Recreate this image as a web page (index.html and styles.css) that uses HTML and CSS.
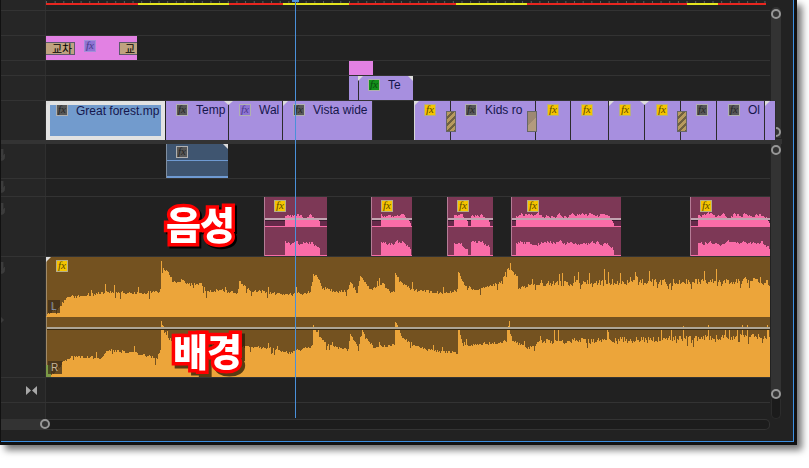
FILE: index.html
```html
<!DOCTYPE html>
<html lang="ko">
<head>
    <meta charset="UTF-8">
    <title>Timeline</title>
    <link rel="stylesheet" href="styles.css">
</head>
<body>
    <div class="window">
        <div class="panel">

            <!-- video tracks -->
            <div class="pane">
                <div class="tracks">
                    <div class="track track-ruler">
                        <div class="head"></div>
                        <div class="body">
                            <div class="ticks"></div>
                            <div class="render-bar">
                                <span class="seg red" style="width:92px"></span>
                                <span class="seg yellow" style="width:91px"></span>
                                <span class="seg red" style="width:54px"></span>
                                <span class="seg yellow" style="width:66px"></span>
                                <span class="seg red" style="width:107px"></span>
                                <span class="seg yellow" style="width:71px"></span>
                                <span class="seg red" style="width:160px"></span>
                                <span class="seg yellow" style="width:31px"></span>
                                <span class="seg red" style="width:48px"></span>
                            </div>
                        </div>
                    </div>
                    <div class="track track-v1">
                        <div class="head"></div>
                        <div class="body"></div>
                    </div>
                    <div class="track track-v1">
                        <div class="head"></div>
                        <div class="body">
                            <div class="clip clip-title clip-open" style="left:0;width:91px">
                                <span class="trans trans-left">교차</span>
                                <span class="fx fx-purple fx-title">fx</span>
                                <span class="trans trans-right">교</span>
                            </div>
                        </div>
                    </div>
                    <div class="track track-v2">
                        <div class="head"></div>
                        <div class="body">
                            <div class="clip clip-title" style="left:303px;width:24px"></div>
                        </div>
                    </div>
                    <div class="track track-v1">
                        <div class="head"></div>
                        <div class="body">
                            <div class="clip clip-video" style="left:303px;width:9px"></div>
                            <div class="clip clip-video clip-short" style="left:312px;width:55px">
                                <span class="fx fx-green">fx</span>
                                <span class="name">Te</span>
                            </div>
                            <i class="mark mark-tl" style="left:312px"></i>
                            <i class="mark mark-tr" style="left:362px"></i>
                        </div>
                    </div>
                    <div class="track track-main">
                        <div class="head"></div>
                        <div class="body">
                            <div class="clip clip-selected" style="left:0;width:119px">
                                <span class="fx fx-gray">fx</span>
                                <span class="name">Great forest.mp</span>
                            </div>
                            <div class="clip clip-video" style="left:120px;width:63px">
                                <span class="fx fx-gray">fx</span>
                                <span class="name">Temp</span>
                            </div>
                            <div class="clip clip-video" style="left:183px;width:54px">
                                <span class="fx fx-purple">fx</span>
                                <span class="name">Wal</span>
                            </div>
                            <div class="clip clip-video" style="left:237px;width:90px">
                                <span class="fx fx-gray">fx</span>
                                <span class="name">Vista wide</span>
                            </div>
                            <div class="clip clip-video clip-edge" style="left:368px;width:37px">
                                <span class="fx fx-yellow">fx</span>
                            </div>
                            <div class="clip clip-video" style="left:405px;width:85px;padding-left:14px">
                                <span class="fx fx-gray">fx</span>
                                <span class="name">Kids ro</span>
                            </div>
                            <div class="clip clip-video" style="left:490px;width:35px;padding-left:11px">
                                <span class="fx fx-yellow">fx</span>
                            </div>
                            <div class="clip clip-video" style="left:525px;width:38px;padding-left:10px">
                                <span class="fx fx-yellow">fx</span>
                            </div>
                            <div class="clip clip-video" style="left:563px;width:36px;padding-left:10px">
                                <span class="fx fx-yellow">fx</span>
                            </div>
                            <div class="clip clip-video" style="left:599px;width:36px;padding-left:11px">
                                <span class="fx fx-yellow">fx</span>
                            </div>
                            <div class="clip clip-video" style="left:635px;width:36px;padding-left:15px">
                                <span class="fx fx-gray">fx</span>
                            </div>
                            <div class="clip clip-video" style="left:671px;width:48px;padding-left:11px">
                                <span class="fx fx-gray">fx</span>
                                <span class="name">Ol</span>
                            </div>
                            <div class="clip clip-video" style="left:719px;width:5px"></div>
                            <i class="stripes" style="left:400px"></i>
                            <i class="stripes stripes-plain" style="left:481px"></i>
                            <i class="stripes" style="left:631px"></i>
                            <i class="mark mark-tl" style="left:0"></i>
                            <i class="mark mark-down" style="left:178px"></i>
                            <i class="mark mark-tl" style="left:237px"></i>
                            <i class="mark mark-tl" style="left:368px"></i>
                            <i class="mark mark-tl" style="left:563px"></i>
                            <i class="mark mark-down" style="left:594px"></i>
                            <i class="mark mark-tl" style="left:719px"></i>
                        </div>
                    </div>
                </div>
                <div class="vscroll vscroll-video">
                    <div class="thumb"><i class="knob"></i><i class="knob"></i></div>
                </div>
            </div>

            <div class="separator"></div>

            <!-- audio tracks -->
            <div class="pane pane-audio">
                <div class="tracks">
                    <div class="track track-a1">
                        <div class="head">
                            <svg class="mic" viewBox="0 0 5 13"><path d="M-3 0h5v8h-5zM3.500 5v3.500q0 2.500-3 3h-3"/></svg>
                        </div>
                        <div class="body">
                            <div class="clip clip-blue" style="left:120px;width:62px">
                                <span class="fx fx-gray">fx</span>
                                <i class="blue-line blue-line-top"></i>
                                <i class="blue-line blue-line-bottom"></i>
                            </div>
                            <i class="mark mark-tr" style="left:177px"></i>
                        </div>
                    </div>
                    <div class="track track-a2">
                        <div class="head">
                            <svg class="mic" viewBox="0 0 5 13"><path d="M-3 0h5v8h-5zM3.500 5v3.500q0 2.500-3 3h-3"/></svg>
                        </div>
                        <div class="body"></div>
                    </div>
                    <div class="track track-a3">
                        <div class="head">
                            <svg class="mic" viewBox="0 0 5 13"><path d="M-3 0h5v8h-5zM3.500 5v3.500q0 2.500-3 3h-3"/></svg>
                        </div>
                        <div class="body">
                            <div class="clip clip-voice" style="left:218px;width:63px"><span class="fx fx-yellow">fx</span></div>
                            <div class="clip clip-voice" style="left:325px;width:41px"><span class="fx fx-yellow">fx</span></div>
                            <div class="clip clip-voice" style="left:401px;width:46px"><span class="fx fx-yellow">fx</span></div>
                            <div class="clip clip-voice" style="left:465px;width:110px;padding-left:15px"><span class="fx fx-yellow">fx</span></div>
                            <div class="clip clip-voice" style="left:644px;width:80px"><span class="fx fx-yellow">fx</span></div>
                            <svg class="wave" id="voiceWave" viewBox="46 197 724 59"></svg>
                        </div>
                    </div>
                    <div class="track track-a4">
                        <div class="head">
                            <svg class="mic" viewBox="0 0 5 13"><path d="M-3 0h5v8h-5zM3.500 5v3.500q0 2.500-3 3h-3"/></svg>
                            <i class="head-arrow"></i>
                        </div>
                        <div class="body">
                            <div class="clip clip-bg" style="left:0;width:724px">
                                <span class="fx fx-yellow">fx</span>
                            </div>
                            <svg class="wave" id="musicWave" viewBox="46 257 724 120"></svg>
                            <span class="channel channel-l">L</span>
                            <i class="channel-green"></i>
                            <span class="channel channel-r">R</span>
                            <i class="mark mark-tl" style="left:0"></i>
                        </div>
                    </div>
                    <div class="track track-a5">
                        <div class="head">
                            <svg class="bowtie" viewBox="0 0 11 9"><path d="M0 0l5 4.500-5 4.500zM11 0l-5 4.500 5 4.500z"/></svg>
                        </div>
                        <div class="body"></div>
                    </div>
                    <div class="track track-a6">
                        <div class="head"></div>
                        <div class="body"></div>
                    </div>
                </div>
                <div class="vscroll vscroll-audio">
                    <div class="thumb"><i class="knob"></i><i class="knob"></i></div>
                    <div class="rest"></div>
                </div>
            </div>

            <div class="hscroll">
                <div class="hscroll-thumb"><i class="knob"></i></div>
                <div class="hscroll-rest"></div>
            </div>
            <div class="footer"></div>

            <!-- things drawn over the tracks -->
            <div class="playhead"></div>
            <div class="playhead-cap"></div>
            <div class="caption caption-voice">음성</div>
            <div class="caption caption-music">배경</div>
        </div>
    </div>

    <script src="script.js"></script>
</body>
</html>
```

FILE: styles.css
```css
html, body {
    margin: 0;
    padding: 0;
    background: white;
}

body {
    width: 809px;
    height: 468px;
    overflow: hidden;
    font-family: "Liberation Sans", Arial, sans-serif;
}

.window {
    width: 797px;
    height: 445px;
    box-sizing: border-box;
    border-left: 1px solid #111;
    border-right: 3px solid #111;
    border-bottom: 3px solid #111;
    background: #222;
    box-shadow: 5px 5px 7px rgba(0, 0, 0, 0.55);
}

.panel {
    position: relative;
    height: 100%;
    box-sizing: border-box;
    border-right: 1px solid #3d8fe0;
    border-bottom: 1px solid #3d8fe0;
    background: #222;
}

.pane {
    display: flex;
    height: 139px;
}

.pane-audio {
    height: 275px;
}

.tracks {
    width: 769px;
    flex: none;
}

/* tracks */
.track {
    display: flex;
    box-sizing: border-box;
    border-bottom: 1px solid #333;
}

.head {
    width: 44px;
    flex: none;
    box-sizing: content-box;
    border-right: 1px solid #2f2f2f;
    background: #262626;
    position: relative;
}

.body {
    position: relative;
    flex: 1;
    background: #222;
}

.track-ruler { height: 11px; }
.track-v1 { height: 25px; }
.track-v2 { height: 15px; }
.track-main { height: 39px; border-bottom: 0; }
.track-a1 { height: 35px; }
.track-a2 { height: 18px; }
.track-a3 { height: 60px; }
.track-a4 { height: 121px; }
.track-a5 { height: 25px; }
.track-a6 { height: 16px; border-bottom: 0; }

.track-a1 .head { padding-top: 5px; }
.track-a2 .head { padding-top: 2px; }
.track-a3 .head { padding-top: 6px; }
.track-a4 .head { padding-top: 5px; }
.track-a5 .head { display: flex; align-items: center; justify-content: center; }

.track-a1 .body, .track-a2 .body, .track-a3 .body, .track-a4 .body, .track-a5 .body, .track-a6 .body {
    background: #212121;
}

.mic {
    display: block;
    width: 5px;
    height: 13px;
}

.mic path {
    fill: #3c3c3c;
    stroke: #3c3c3c;
    stroke-width: 0.8;
}

.head-arrow {
    position: absolute;
    left: 0;
    top: 60px;
    border-left: 3px solid #3c3c3c;
    border-top: 3px solid transparent;
    border-bottom: 3px solid transparent;
}

.bowtie {
    width: 11px;
    height: 9px;
    margin-left: 17px;
}

.bowtie path {
    fill: #a8a8a8;
}

/* ruler */
.ticks {
    height: 3px;
    background-image: linear-gradient(90deg, #5e5e5e 1px, transparent 1px);
    background-size: 8.67px 2px;
    background-repeat: repeat-x;
    background-position: 0 1px;
}

.render-bar {
    display: flex;
    height: 2px;
}

.seg.red { background: #e8261f; }
.seg.yellow { background: #e6e61e; }

/* clips */
.clip {
    position: absolute;
    top: 0;
    bottom: 0;
    box-sizing: border-box;
    overflow: hidden;
    display: flex;
    align-items: flex-start;
    padding-left: 10px;
    padding-top: 3px;
}

.clip-title {
    background: #e281e3;
    padding: 0;
}

.clip-open {
    overflow: visible;
}

.clip-video {
    background: #a78fdf;
    border-right: 1px solid #2c2c2c;
}

.clip-short {
    border-left: 1px solid #2c2c2c;
    border-right: 0;
    padding-left: 9px;
}

.clip-edge {
    border-left: 1px solid #d5d5d5;
    padding-left: 9px;
}

.clip-selected {
    background: #729bcd;
    border: 4px solid #e2e2e2;
    padding-left: 6px;
    padding-top: 0;
}

.clip-selected .fx {
    margin-top: -1px;
}

.clip-blue {
    background: #3f5570;
    border-left: 1px solid #7f8ea0;
    padding-left: 9px;
    padding-top: 2px;
}

.clip-voice {
    background: #7d3856;
    border-left: 1px solid #b57c96;
    padding-left: 9px;
}

.clip-bg {
    background: #745220;
    border-left: 1px solid #a08a68;
    padding-left: 9px;
}

.name {
    margin: -1px 0 0 8px;
    font-size: 12px;
    line-height: 14px;
    white-space: nowrap;
    color: #15164c;
}

.fx {
    position: relative;
    z-index: 2;
    flex: none;
    width: 12px;
    height: 12px;
    box-sizing: border-box;
    border: 1px solid #b0b0b0;
    font-family: "Liberation Serif", serif;
    font-style: italic;
    font-size: 11px;
    line-height: 9px;
    text-align: center;
}

.fx-gray { background: #575757; color: #262626; }
.fx-purple { background: #8e73d3; color: #4c3a8a; }
.fx-green { background: #13901a; color: #0a4a10; }
.fx-yellow { background: #f5c400; color: #5e4a00; border-color: #b6ad88; }

.fx-title {
    position: absolute;
    left: 38px;
    top: 4px;
    border-color: #a48fd8;
}

.trans {
    position: absolute;
    top: 6px;
    height: 13px;
    box-sizing: border-box;
    background: #bfa27f;
    border: 1px solid #5d5a6c;
    font-family: "Noto Sans CJK KR", sans-serif;
    font-size: 11px;
    line-height: 11px;
    color: #000;
    white-space: nowrap;
}

.trans-left {
    left: 0;
    width: 29px;
    border-left: 0;
    padding-left: 6px;
}

.trans-right {
    left: 73px;
    width: 18px;
    border-right: 0;
    padding-left: 5px;
}

.stripes {
    position: absolute;
    z-index: 2;
    top: 10px;
    width: 10px;
    height: 21px;
    box-sizing: border-box;
    border: 1px solid #666;
    background: repeating-linear-gradient(135deg, #b79a5e 0 3px, #6f6040 3px 5px);
}

.stripes-plain {
    background: linear-gradient(135deg, #9d8872 50%, #b39b7e 50%);
}

/* small corner triangles on the clips */
.mark {
    position: absolute;
    z-index: 3;
    top: 0;
    width: 5px;
    height: 5px;
    background: #dcdcdc;
}

.mark-tl { clip-path: polygon(0 0, 100% 0, 0 100%); }
.mark-tr { clip-path: polygon(0 0, 100% 0, 100% 100%); }

.mark-down {
    width: 9px;
    height: 4px;
    clip-path: polygon(0 0, 100% 0, 50% 100%);
}

.blue-line {
    position: absolute;
    left: 0;
    right: 0;
    height: 1px;
    background: #6f9ad2;
}

.blue-line-top { top: 16px; }
.blue-line-bottom { top: 32px; height: 2px; }

.wave {
    position: absolute;
    left: 0;
    top: 0;
    width: 724px;
    height: 100%;
    z-index: 1;
}

.track-a3 .wave { height: 59px; }
.track-a4 .wave { height: 120px; }

.channel {
    position: absolute;
    z-index: 2;
    box-sizing: border-box;
    background: rgba(60, 45, 25, 0.75);
    font-size: 10px;
    line-height: 13px;
    padding-left: 3px;
}

.channel-l {
    left: 2px;
    top: 43px;
    width: 12px;
    height: 13px;
    color: #8898b5;
}

.channel-r {
    left: 2px;
    top: 104px;
    width: 14px;
    height: 13px;
    color: #c5b49a;
}

.channel-green {
    position: absolute;
    z-index: 2;
    left: 0;
    top: 108px;
    width: 5px;
    height: 12px;
    background: #7b9a46;
}

.separator {
    height: 5px;
    width: 781px;
    background: #333;
}

/* scrollbars */
.vscroll {
    width: 10px;
    margin-left: 1px;
    display: flex;
    flex-direction: column;
}

.thumb {
    display: flex;
    flex-direction: column;
    justify-content: space-between;
    align-items: center;
    background: #333;
    padding: 1px 0;
}

.vscroll-video {
    padding-top: 7px;
}

.vscroll-video .thumb {
    height: 131px;
    border-radius: 5px 5px 0 0;
    padding: 2px 0 1px;
    box-sizing: border-box;
}

.vscroll-audio .thumb {
    height: 255px;
    box-sizing: border-box;
    padding: 1px 0 0;
    border-radius: 0 0 5px 5px;
}

.rest {
    height: 20px;
    background: #1b1b1b;
    border: 1px solid #2c2c2c;
    border-top: 0;
    border-radius: 0 0 5px 5px;
    box-sizing: border-box;
}

.knob {
    display: block;
    width: 10px;
    height: 10px;
    box-sizing: border-box;
    border: 2px solid #979797;
    border-radius: 50%;
    background: #333;
}

.hscroll {
    display: flex;
    height: 11px;
    width: 769px;
}

.hscroll-thumb {
    width: 44px;
    flex: none;
    position: relative;
    background: #333;
}

.hscroll-thumb .knob {
    position: absolute;
    right: -5px;
    top: 0;
}

.hscroll-rest {
    flex: 1;
    background: #1c1c1c;
    border: 1px solid #333;
    border-left: 0;
    border-radius: 0 5px 5px 0;
}

.footer {
    height: 12px;
}

/* overlays */
.playhead {
    position: absolute;
    z-index: 4;
    left: 294px;
    top: 0;
    width: 1px;
    height: 418px;
    background: #4a90d9;
}

.playhead-cap {
    position: absolute;
    z-index: 4;
    left: 291px;
    top: 0;
    width: 7px;
    height: 2px;
    background: #4a90d9;
}

.caption {
    position: absolute;
    z-index: 5;
    font-family: "Noto Sans CJK KR", sans-serif;
    font-weight: 900;
    font-size: 38px;
    line-height: 46px;
    letter-spacing: -1px;
    color: white;
    -webkit-text-stroke: 7px #f00;
    paint-order: stroke fill;
    white-space: nowrap;
}

.caption-voice {
    left: 165px;
    top: 200px;
    filter: drop-shadow(2px 2px 0 #000);
}

.caption-music {
    left: 172px;
    top: 327px;
    filter: drop-shadow(3px 3px 0 rgba(40, 25, 5, 0.75));
}
```

FILE: script.js
```js
// Small seeded random, so the waveforms come out the same on every load
let seed = 4711;
function random() {
    seed = (seed + 0x6D2B79F5) | 0;
    let t = Math.imul(seed ^ (seed >>> 15), 1 | seed);
    t = (t + Math.imul(t ^ (t >>> 7), 61 | t)) ^ t;
    return ((t ^ (t >>> 14)) >>> 0) / 4294967296;
}

// Height of an envelope (list of [x, y]) at x
function envelopeAt(points, x) {
    for (let i = 1; i < points.length; i++) {
        if (x <= points[i][0]) {
            const [x0, y0] = points[i - 1];
            const [x1, y1] = points[i];
            return y0 + (y1 - y0) * (x - x0) / (x1 - x0);
        }
    }
    return points[points.length - 1][1];
}

function addPath(svg, d, color, width) {
    const path = document.createElementNS("http://www.w3.org/2000/svg", "path");
    path.setAttribute("d", d);
    path.setAttribute("fill", "none");
    path.setAttribute("stroke", color);
    path.setAttribute("stroke-width", width);
    path.setAttribute("shape-rendering", "crispEdges");
    svg.appendChild(path);
}

// One vertical stroke per pixel column
function columns(x0, x1, base, topAt) {
    let d = "";
    for (let x = x0; x < x1; x++) {
        d += `M${x + 0.5} ${base}V${Math.round(topAt(x))}`;
    }
    return d;
}

// Background music, left and right channel
const musicLeft = [[46, 316], [52, 312], [60, 306], [67, 297], [87, 295], [107, 292], [133, 293], [158, 292],
    [160, 290], [161, 262], [163, 268], [168, 273], [173, 282], [183, 280], [190, 285], [200, 283], [207, 292],
    [220, 290], [237, 293], [240, 282], [250, 290], [270, 293], [287, 295], [310, 292], [313, 275], [318, 278],
    [322, 288], [337, 292], [348, 290], [350, 282], [357, 293], [360, 275], [370, 290], [382, 283], [390, 292],
    [394, 291], [395, 273], [400, 282], [413, 290], [443, 293], [453, 292], [457, 290], [458, 272], [463, 283],
    [473, 290], [500, 283], [508, 268], [517, 277], [518, 288], [540, 283], [770, 281]];

const musicRight = [[46, 376], [55, 372], [63, 362], [72, 357], [100, 358], [108, 350], [133, 353], [157, 358],
    [160, 350], [161, 322], [167, 338], [180, 345], [240, 346], [270, 348], [287, 353], [307, 348], [312, 346],
    [313, 325], [318, 335], [327, 345], [348, 350], [350, 333], [358, 347], [362, 330], [373, 348], [393, 345],
    [394, 344], [395, 321], [402, 337], [413, 345], [427, 350], [457, 353], [458, 328], [463, 345], [497, 343],
    [506, 341], [507, 322], [512, 340], [527, 348], [540, 342], [770, 336]];

const musicSvg = document.getElementById("musicWave");

function musicNoise(x) {
    const busy = x > 540;
    let n = (random() - 0.5) * (busy ? 6 : 3);
    const r = random();
    if (r < (busy ? 0.08 : 0.04)) n += 4 + random() * 3;
    else if (r > (busy ? 0.94 : 0.98)) n -= 4 + random() * (busy ? 9 : 3);
    return n;
}

addPath(musicSvg, columns(46, 770, 317, x => envelopeAt(musicLeft, x) + musicNoise(x)), "#eca53a", 1);
addPath(musicSvg, columns(46, 770, 377, x => Math.max(321, envelopeAt(musicRight, x) + musicNoise(x))), "#eca53a", 1);
addPath(musicSvg, "M47 327.500H770", "#ada595", 2);
addPath(musicSvg, "M47 329H770", "#3a2a10", 1);

// Voice clips: [left, right] of the clip, and the loud parts inside it
const voiceClips = [
    { x0: 265, x1: 327, parts: [[285, 320]] },
    { x0: 372, x1: 412, parts: [[381, 411]] },
    { x0: 448, x1: 493, parts: [[454, 468], [471, 490]] },
    { x0: 512, x1: 621, parts: [[516, 614]] },
    { x0: 691, x1: 770, parts: [[698, 770]] }
];

const voiceSvg = document.getElementById("voiceWave");

// A slow random walk looks more like speech than plain noise
function speech(a, b, top) {
    let walk = 0;
    return x => {
        walk = walk * 0.6 + (random() - 0.5) * 3.5;
        const fade = Math.max(0, 8 - (b - x)) * 0.8;
        return top + walk + fade;
    };
}

voiceClips.forEach(clip => {
    addPath(voiceSvg, `M${clip.x0} 223H${clip.x1}`, "#66294a", 6);
    addPath(voiceSvg, `M${clip.x0} 220H${clip.x1}`, "#3a2030", 1);
    clip.parts.forEach(([a, b]) => {
        addPath(voiceSvg, columns(a, b, 226, speech(a, b, 215)), "#f96ca7", 1);
        addPath(voiceSvg, columns(a, b, 255, speech(a, b, 243)), "#f96ca7", 1);
    });
    addPath(voiceSvg, `M${clip.x0} 226.500H${clip.x1}M${clip.x0} 255.500H${clip.x1}`, "#f96ca7", 1);
    addPath(voiceSvg, `M${clip.x0} 218.500H${clip.x1}`, "#c3a5b2", 2);
});
```
